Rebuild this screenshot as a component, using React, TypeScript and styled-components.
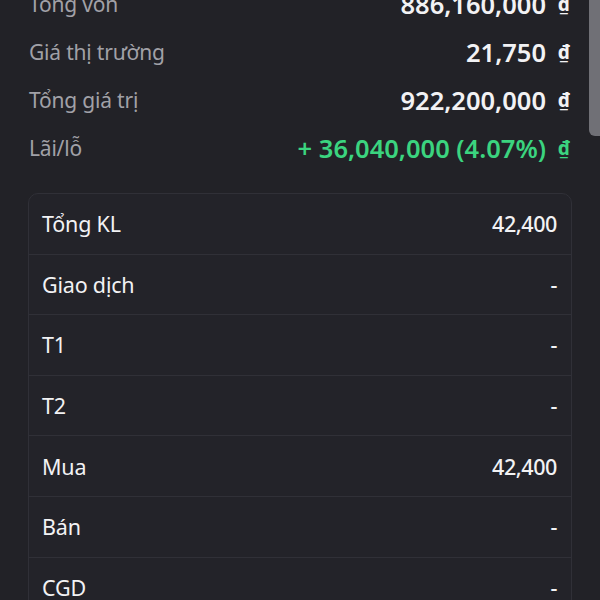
import styled, { createGlobalStyle } from 'styled-components'

const GlobalStyle = createGlobalStyle`
  html, body {
    margin: 0;
    padding: 0;
    background: #222227;
    overflow: hidden;
  }
  body {
    font-family: 'Noto Sans', 'Open Sans', sans-serif;
  }
`

const Screen = styled.div`
  position: relative;
  width: 600px;
  height: 600px;
  overflow: hidden;
  background: #222227;
`

// list is scrolled a little, so the first row is cut at the top
const Content = styled.div`
  padding: 0 28px 0 28px;
  margin-top: -20px;
`

const Summary = styled.div`
  display: flex;
  flex-direction: column;
`

const SummaryRow = styled.div`
  display: flex;
  align-items: center;
  justify-content: space-between;
  height: 48px;
  padding-left: 1px;
`

const SummaryLabel = styled.span`
  font-size: 21px;
  color: #a1a1a7;
  letter-spacing: -0.2px;
`

const SummaryValue = styled.span<{ $green?: boolean }>`
  display: flex;
  align-items: center;
  gap: 11px;
  font-size: 25.5px;
  font-weight: 600;
  color: ${(p) => (p.$green ? '#3bd47f' : '#f2f2f4')};
`

const Currency = styled.span`
  font-size: 19px;
  font-weight: 700;
  width: 14px;
  text-align: center;
  margin-right: 1px;
`

const Card = styled.div`
  margin-top: 21px;
  border: 1px solid #303037;
  border-radius: 10px;
  background: #232329;
`

const CardRow = styled.div`
  display: flex;
  align-items: center;
  justify-content: space-between;
  height: 59.6px;
  padding: 0 14px 0 13px;
  border-bottom: 1px solid #303037;
  color: #f2f2f4;
`

const CardLabel = styled.span`
  font-size: 21.5px;
  font-weight: 400;
  letter-spacing: -0.2px;
`

const CardValue = styled.span`
  font-size: 21.5px;
  font-weight: 500;
  letter-spacing: -0.4px;
`

const ScrollThumb = styled.div`
  position: absolute;
  top: 0;
  right: 0;
  width: 11px;
  height: 136px;
  background: #707076;
  border-bottom-left-radius: 6px;
`

const summary = [
  { label: 'Tổng vốn', value: '886,160,000' },
  { label: 'Giá thị trường', value: '21,750' },
  { label: 'Tổng giá trị', value: '922,200,000' },
  { label: 'Lãi/lỗ', value: '+ 36,040,000 (4.07%)', green: true },
]

const details = [
  { label: 'Tổng KL', value: '42,400' },
  { label: 'Giao dịch', value: '-' },
  { label: 'T1', value: '-' },
  { label: 'T2', value: '-' },
  { label: 'Mua', value: '42,400' },
  { label: 'Bán', value: '-' },
  { label: 'CGD', value: '-' },
]

export default function App() {
  return (
    <Screen>
      <GlobalStyle />
      <Content>
        <Summary>
          {summary.map((row) => (
            <SummaryRow key={row.label}>
              <SummaryLabel>{row.label}</SummaryLabel>
              <SummaryValue $green={row.green}>
                {row.value}
                <Currency>₫</Currency>
              </SummaryValue>
            </SummaryRow>
          ))}
        </Summary>
        <Card>
          {details.map((row) => (
            <CardRow key={row.label}>
              <CardLabel>{row.label}</CardLabel>
              <CardValue>{row.value}</CardValue>
            </CardRow>
          ))}
        </Card>
      </Content>
      <ScrollThumb />
    </Screen>
  )
}
